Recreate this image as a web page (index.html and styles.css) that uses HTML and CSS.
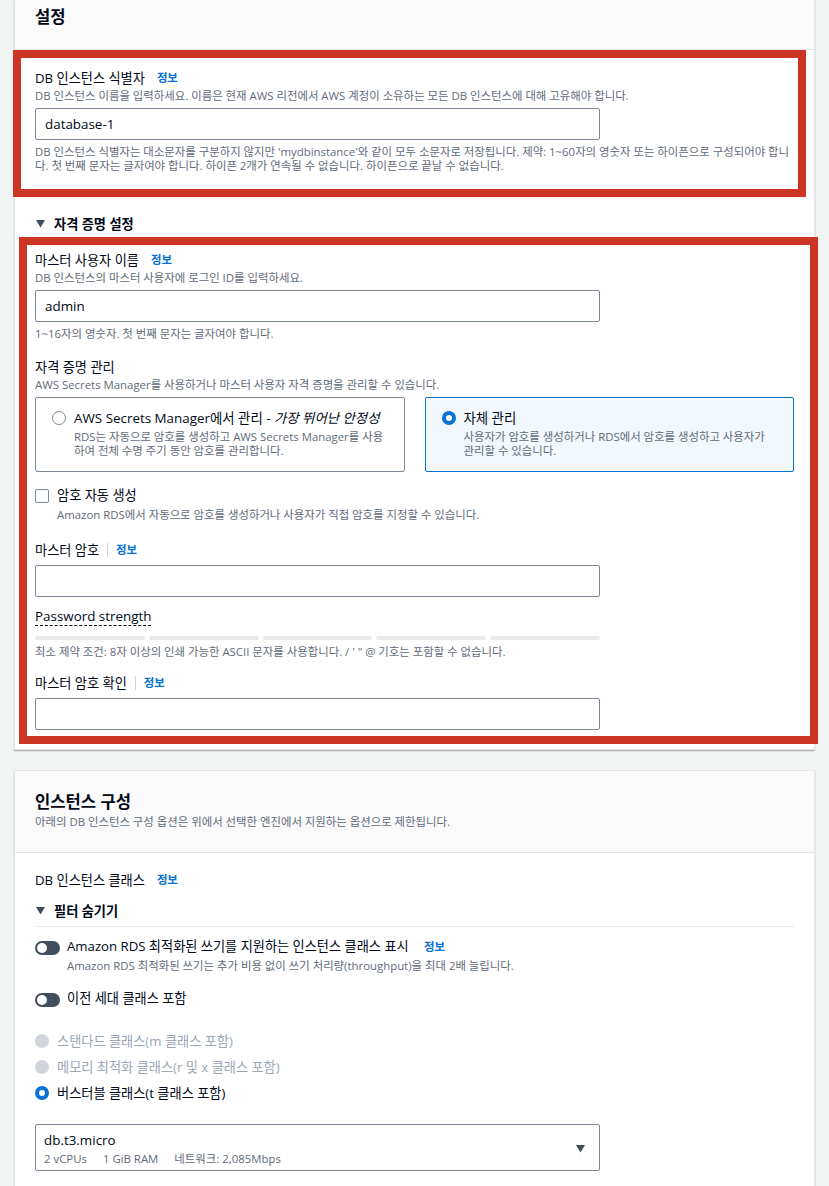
FILE: index.html
```html
<!DOCTYPE html>
<html lang="ko">
<head>
    <meta charset="UTF-8">
    <meta name="viewport" content="width=device-width, initial-scale=1.0">
    <title>데이터베이스 생성</title>
    <link rel="stylesheet" href="styles.css">
</head>
<body>

<div class="page">
    <section class="card">
        <div class="card-header">
            <h2 class="card-title">설정</h2>
        </div>
        <div class="card-body settings-body">
            <div class="mark mark-id">
                <div class="label">DB 인스턴스 식별자 <span class="info">정보</span></div>
                <div class="desc">DB 인스턴스 이름을 입력하세요. 이름은 현재 AWS 리전에서 AWS 계정이 소유하는 모든 DB 인스턴스에 대해 고유해야 합니다.</div>
                <input class="input" type="text" value="database-1">
                <div class="hint">DB 인스턴스 식별자는 대소문자를 구분하지 않지만 'mydbinstance'와 같이 모두 소문자로 저장됩니다. 제약: 1~60자의 영숫자 또는 하이픈으로 구성되어야 합니<br>다. 첫 번째 문자는 글자여야 합니다. 하이픈 2개가 연속될 수 없습니다. 하이픈으로 끝날 수 없습니다.</div>
            </div>

            <div class="expander expander-cred">
                <svg class="caret" width="9" height="8" viewBox="0 0 9 8"><path d="M0 0h9L4.5 7.5z"/></svg>
                자격 증명 설정
            </div>

            <div class="mark mark-cred">
                <div class="label">마스터 사용자 이름 <span class="info">정보</span></div>
                <div class="desc">DB 인스턴스의 마스터 사용자에 로그인 ID를 입력하세요.</div>
                <input class="input" type="text" value="admin">
                <div class="hint">1~16자의 영숫자. 첫 번째 문자는 글자여야 합니다.</div>

                <div class="label field-gap">자격 증명 관리</div>
                <div class="desc">AWS Secrets Manager를 사용하거나 마스터 사용자 자격 증명을 관리할 수 있습니다.</div>
                <div class="tiles">
                    <div class="tile">
                        <span class="radio"></span>
                        <div>
                            <div class="tile-title">AWS Secrets Manager에서 관리 - <em>가장 뛰어난 안정성</em></div>
                            <div class="tile-desc">RDS는 자동으로 암호를 생성하고 AWS Secrets Manager를 사용<br>하여 전체 수명 주기 동안 암호를 관리합니다.</div>
                        </div>
                    </div>
                    <div class="tile tile-selected">
                        <span class="radio radio-checked"></span>
                        <div>
                            <div class="tile-title">자체 관리</div>
                            <div class="tile-desc">사용자가 암호를 생성하거나 RDS에서 암호를 생성하고 사용자가<br>관리할 수 있습니다.</div>
                        </div>
                    </div>
                </div>

                <div class="check-row">
                    <span class="checkbox"></span>
                    <div>
                        <div class="check-label">암호 자동 생성</div>
                        <div class="check-desc">Amazon RDS에서 자동으로 암호를 생성하거나 사용자가 직접 암호를 지정할 수 있습니다.</div>
                    </div>
                </div>

                <div class="label pw-label">마스터 암호<span class="sep"></span><span class="info info-tight">정보</span></div>
                <input class="input" type="password">

                <div class="strength">
                    <span class="strength-label">Password strength</span>
                </div>
                <div class="strength-bars">
                    <span></span><span></span><span></span><span></span><span></span>
                </div>
                <div class="hint rule">최소 제약 조건: 8자 이상의 인쇄 가능한 ASCII 문자를 사용합니다. / ' " @ 기호는 포함할 수 없습니다.</div>

                <div class="label confirm-label">마스터 암호 확인<span class="sep"></span><span class="info info-tight">정보</span></div>
                <input class="input" type="password">
            </div>
        </div>
    </section>

    <section class="card card-instance">
        <div class="card-header instance-header">
            <h2 class="card-title">인스턴스 구성</h2>
            <div class="header-desc">아래의 DB 인스턴스 구성 옵션은 위에서 선택한 엔진에서 지원하는 옵션으로 제한됩니다.</div>
        </div>
        <div class="card-body instance-body">
            <div class="label">DB 인스턴스 클래스 <span class="info">정보</span></div>

            <div class="expander expander-filter">
                <svg class="caret" width="9" height="8" viewBox="0 0 9 8"><path d="M0 0h9L4.5 7.5z"/></svg>
                필터 숨기기
            </div>
            <div class="divider"></div>

            <div class="toggle-row">
                <span class="toggle"></span>
                <div>
                    <div class="toggle-label">Amazon RDS 최적화된 쓰기를 지원하는 인스턴스 클래스 표시 <span class="info">정보</span></div>
                    <div class="toggle-desc">Amazon RDS 최적화된 쓰기는 추가 비용 없이 쓰기 처리량(throughput)을 최대 2배 늘립니다.</div>
                </div>
            </div>
            <div class="toggle-row toggle-row-2">
                <span class="toggle"></span>
                <div class="toggle-label">이전 세대 클래스 포함</div>
            </div>

            <div class="radio-list">
                <div class="radio-row disabled"><span class="radio radio-disabled"></span>스탠다드 클래스(m 클래스 포함)</div>
                <div class="radio-row disabled"><span class="radio radio-disabled"></span>메모리 최적화 클래스(r 및 x 클래스 포함)</div>
                <div class="radio-row"><span class="radio radio-checked"></span>버스터블 클래스(t 클래스 포함)</div>
            </div>

            <div class="select">
                <div>
                    <div class="select-value">db.t3.micro</div>
                    <div class="select-meta"><span>2 vCPUs</span><span>1 GiB RAM</span><span>네트워크: 2,085Mbps</span></div>
                </div>
                <svg class="select-caret" width="9" height="8" viewBox="0 0 9 8"><path d="M0 0h9L4.5 7.5z"/></svg>
            </div>
        </div>
    </section>
</div>

</body>
</html>
```

FILE: styles.css
```css
* {
    box-sizing: border-box;
}

body {
    margin: 0;
    background: #f2f3f3;
    font-family: "Open Sans", "Noto Sans CJK KR", sans-serif;
    font-size: 13.2px;
    line-height: 20px;
    color: #000716;
}

.page {
    padding: 0 14px;
}

.card {
    background: #fff;
    border: 1px solid #e3e6e8;
    border-top: none;
    box-shadow: 0 1px 1px rgba(0, 28, 36, 0.3);
}

.card-instance {
    margin-top: 20px;
    border-top: 1px solid #e3e6e8;
}

.card-header {
    background: #fafafa;
    border-bottom: 1px solid #e3e6e8;
    padding: 5px 20px 20px;
}

.card-title {
    margin: 0;
    font-size: 16.6px;
    line-height: 24px;
    font-weight: 700;
}

.instance-header {
    padding: 19px 20px 22px;
}

.header-desc {
    font-size: 11.4px;
    line-height: 16px;
    color: #5f6b7a;
}

.card-body {
    padding: 0 20px 5px;
}

/* red highlight boxes */
.mark {
    border: 8px solid #cc3423;
}

.mark-id {
    margin: 0 -12px 0 -22px;
    padding: 10px 0 16px 14px;
}

.mark-cred {
    margin: 3px -24px 0 -16px;
    padding: 5px 16px 6px 8px;
}

.label {
    display: flex;
    align-items: center;
}

.info {
    color: #0972d3;
    font-weight: 700;
    font-size: 11.4px;
    margin-left: 12px;
}

.info-tight {
    margin-left: 0;
}

.sep {
    width: 1px;
    height: 14px;
    background: #d1d5db;
    margin: 0 8px;
}

.desc {
    font-size: 11.4px;
    line-height: 15px;
    color: #5f6b7a;
}

.input {
    display: block;
    width: 565px;
    height: 32px;
    margin-top: 5px;
    padding: 0 9px;
    border: 1px solid #7d8998;
    border-radius: 2px;
    background: #fff;
    font: inherit;
    font-size: 13.4px;
    color: #000716;
}

.hint {
    margin-top: 5px;
    font-size: 11.4px;
    line-height: 14px;
    color: #5f6b7a;
}

.expander {
    display: flex;
    align-items: center;
    gap: 9px;
    font-weight: 700;
}

.caret {
    fill: #414d5c;
    margin-left: 1px;
}

.expander-cred {
    margin-top: 17px;
}

.field-gap {
    margin-top: 16px;
}

.tiles {
    display: grid;
    grid-template-columns: 1fr 1fr;
    gap: 20px;
    margin-top: 5px;
}

.tile {
    display: flex;
    gap: 8px;
    border: 1px solid #7d8998;
    border-radius: 2px;
    padding: 10px 12px 13px 16px;
    height: 75px;
}

.tile-selected {
    border-color: #0972d3;
    background: #f2f8fd;
}

.tile-title {
    font-size: 13.4px;
}

.tile-desc {
    margin-top: 2px;
    font-size: 11.4px;
    line-height: 14px;
    color: #5f6b7a;
}

.radio {
    flex: none;
    width: 14px;
    height: 14px;
    margin-top: 3px;
    border: 1.5px solid #7d8998;
    border-radius: 50%;
    background: #fff;
}

.radio-checked {
    border: 4px solid #0972d3;
}

.radio-disabled {
    border: none;
    background: #d1d5db;
}

.check-row {
    display: flex;
    gap: 8px;
    margin-top: 13px;
}

.checkbox {
    flex: none;
    width: 14px;
    height: 14px;
    margin-top: 4px;
    border: 1.5px solid #7d8998;
    border-radius: 2px;
}

.check-desc,
.toggle-desc {
    margin-top: 3px;
    font-size: 11.4px;
    line-height: 14px;
    color: #5f6b7a;
}

.pw-label {
    margin-top: 18px;
}

.strength {
    display: flex;
    margin-top: 10px;
}

.strength-label {
    line-height: 18px;
    font-size: 13.4px;
    border-bottom: 1px dashed #000716;
}

.strength-bars {
    display: flex;
    gap: 4px;
    width: 565px;
    margin-top: 10px;
}

.strength-bars span {
    flex: 1;
    height: 4px;
    border-radius: 2px;
    background: #e9ebed;
}

.confirm-label {
    margin-top: 14px;
}

/* instance section */
.instance-body {
    padding: 17px 20px 15px;
}

.expander-filter {
    margin-top: 11px;
}

.divider {
    height: 1px;
    background: #e9ebed;
    margin-top: 5px;
}

.toggle-row {
    display: flex;
    gap: 7px;
    margin-top: 9px;
}

.toggle-row-2 {
    margin-top: 15px;
}

.toggle {
    flex: none;
    position: relative;
    width: 25px;
    height: 14px;
    margin-top: 5px;
    border-radius: 7px;
    background: #414d5c;
}

.toggle::after {
    content: "";
    position: absolute;
    left: 2px;
    top: 2px;
    width: 10px;
    height: 10px;
    border-radius: 50%;
    background: #fff;
}

.toggle-desc {
    margin-top: 2px;
}

.radio-list {
    display: flex;
    flex-direction: column;
    gap: 6px;
    margin-top: 23px;
}

.radio-row {
    display: flex;
    gap: 8px;
}

.radio-row .radio {
    margin-top: 3px;
}

.radio-row.disabled {
    color: #9ba7b6;
}

.select {
    display: flex;
    justify-content: space-between;
    width: 565px;
    height: 47px;
    margin-top: 21px;
    padding: 5px 14px 0 8px;
    border: 1px solid #7d8998;
    border-radius: 2px;
}

.select-value {
    font-size: 13.4px;
}

.select-meta {
    display: flex;
    gap: 16px;
    margin-top: 1px;
    font-size: 11.4px;
    line-height: 16px;
    color: #5f6b7a;
}

.select-caret {
    fill: #414d5c;
    margin-top: 15px;
}
```
